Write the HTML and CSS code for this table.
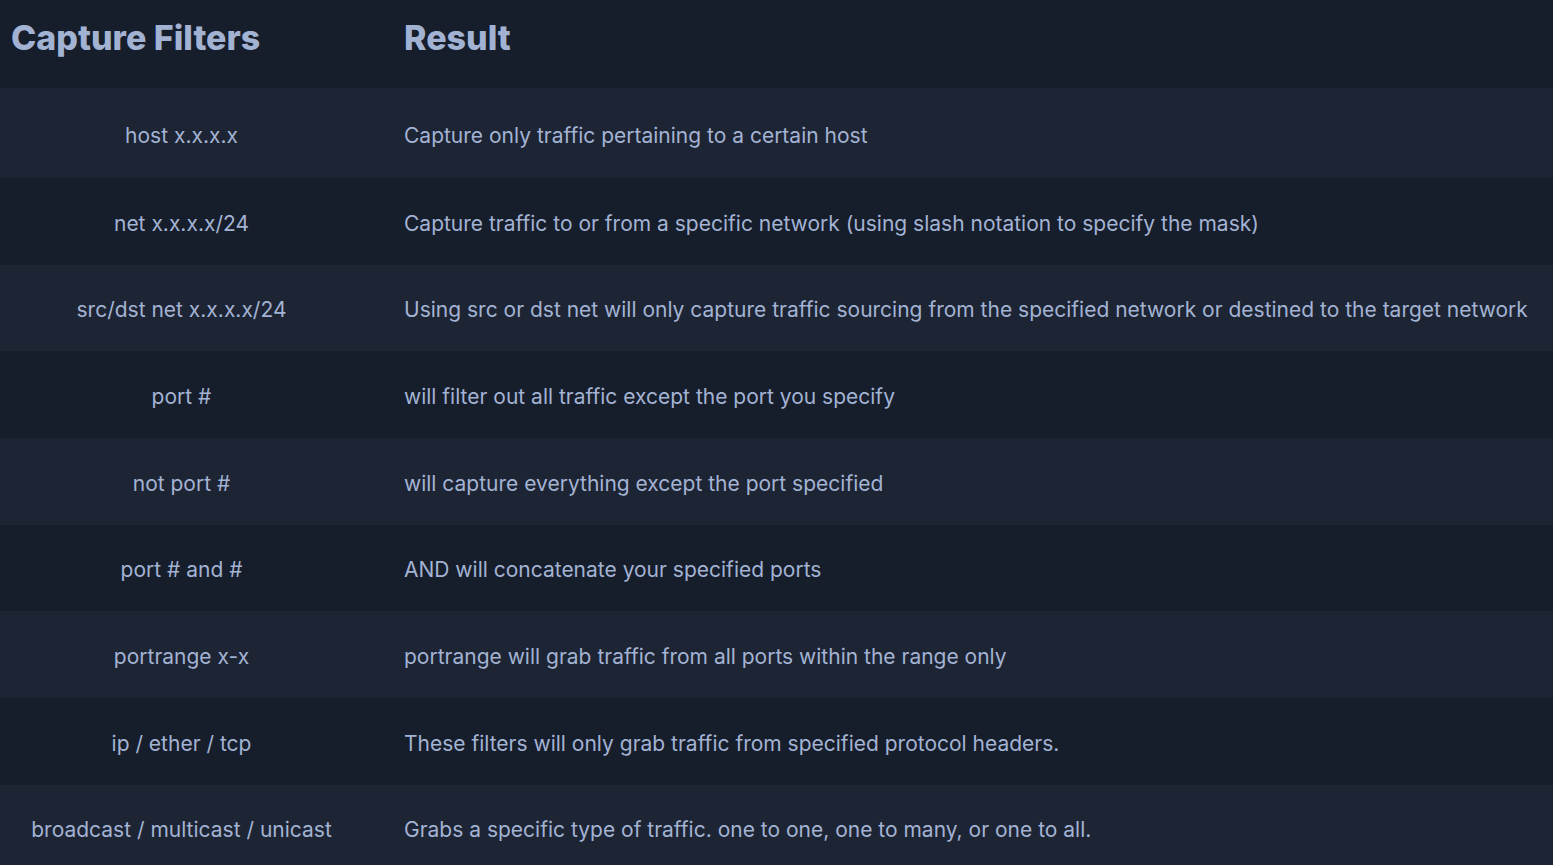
FILE: index.html
```html
<!DOCTYPE html>
<html>
<head>
<meta charset="utf-8">
<link rel="stylesheet" href="styles.css">
</head>
<body>
<table class="filters">
  <thead>
    <tr><th class="col-filter">Capture Filters</th><th class="col-result">Result</th></tr>
  </thead>
  <tbody>
    <tr class="first"><td class="cell-filter">host x.x.x.x</td><td class="cell-result">Capture only traffic pertaining to a certain host</td></tr>
    <tr><td class="cell-filter">net x.x.x.x/24</td><td class="cell-result">Capture traffic to or from a specific network (using slash notation to specify the mask)</td></tr>
    <tr><td class="cell-filter">src/dst net x.x.x.x/24</td><td class="cell-result">Using src or dst net will only capture traffic sourcing from the specified network or destined to the target network</td></tr>
    <tr><td class="cell-filter">port #</td><td class="cell-result">will filter out all traffic except the port you specify</td></tr>
    <tr><td class="cell-filter">not port #</td><td class="cell-result">will capture everything except the port specified</td></tr>
    <tr><td class="cell-filter">port # and #</td><td class="cell-result">AND will concatenate your specified ports</td></tr>
    <tr><td class="cell-filter">portrange x-x</td><td class="cell-result">portrange will grab traffic from all ports within the range only</td></tr>
    <tr><td class="cell-filter">ip / ether / tcp</td><td class="cell-result">These filters will only grab traffic from specified protocol headers.</td></tr>
    <tr><td class="cell-filter">broadcast / multicast / unicast</td><td class="cell-result">Grabs a specific type of traffic. one to one, one to many, or one to all.</td></tr>
  </tbody>
</table>
</body>
</html>
```
FILE: styles.css
```css
html, body {
  margin: 0;
  padding: 0;
  background: #161d2b;
}
body {
  font-family: Inter, "Noto Sans", sans-serif;
  color: #a3b3d3;
}
.filters {
  width: 100%;
  border-collapse: collapse;
}
.filters th {
  font-size: 34px;
  font-weight: 800;
  text-align: left;
  height: 75px;
  padding: 0 0 13px 0;
  color: #a2b2d2;
  vertical-align: middle;
}
.col-filter {
  width: 363px;
  padding-left: 11px !important;
  box-sizing: border-box;
}
.col-result {
  padding-left: 41px !important;
}
.filters td {
  font-size: 21px;
  height: 82.67px;
  padding: 4px 0 0 0;
  vertical-align: middle;
}
.filters tbody tr.first td {
  height: 86px;
}
.filters tbody tr:nth-child(odd) {
  background: #1d2434;
}
.cell-filter {
  text-align: center;
}
.cell-result {
  padding-left: 41px !important;
}
```
